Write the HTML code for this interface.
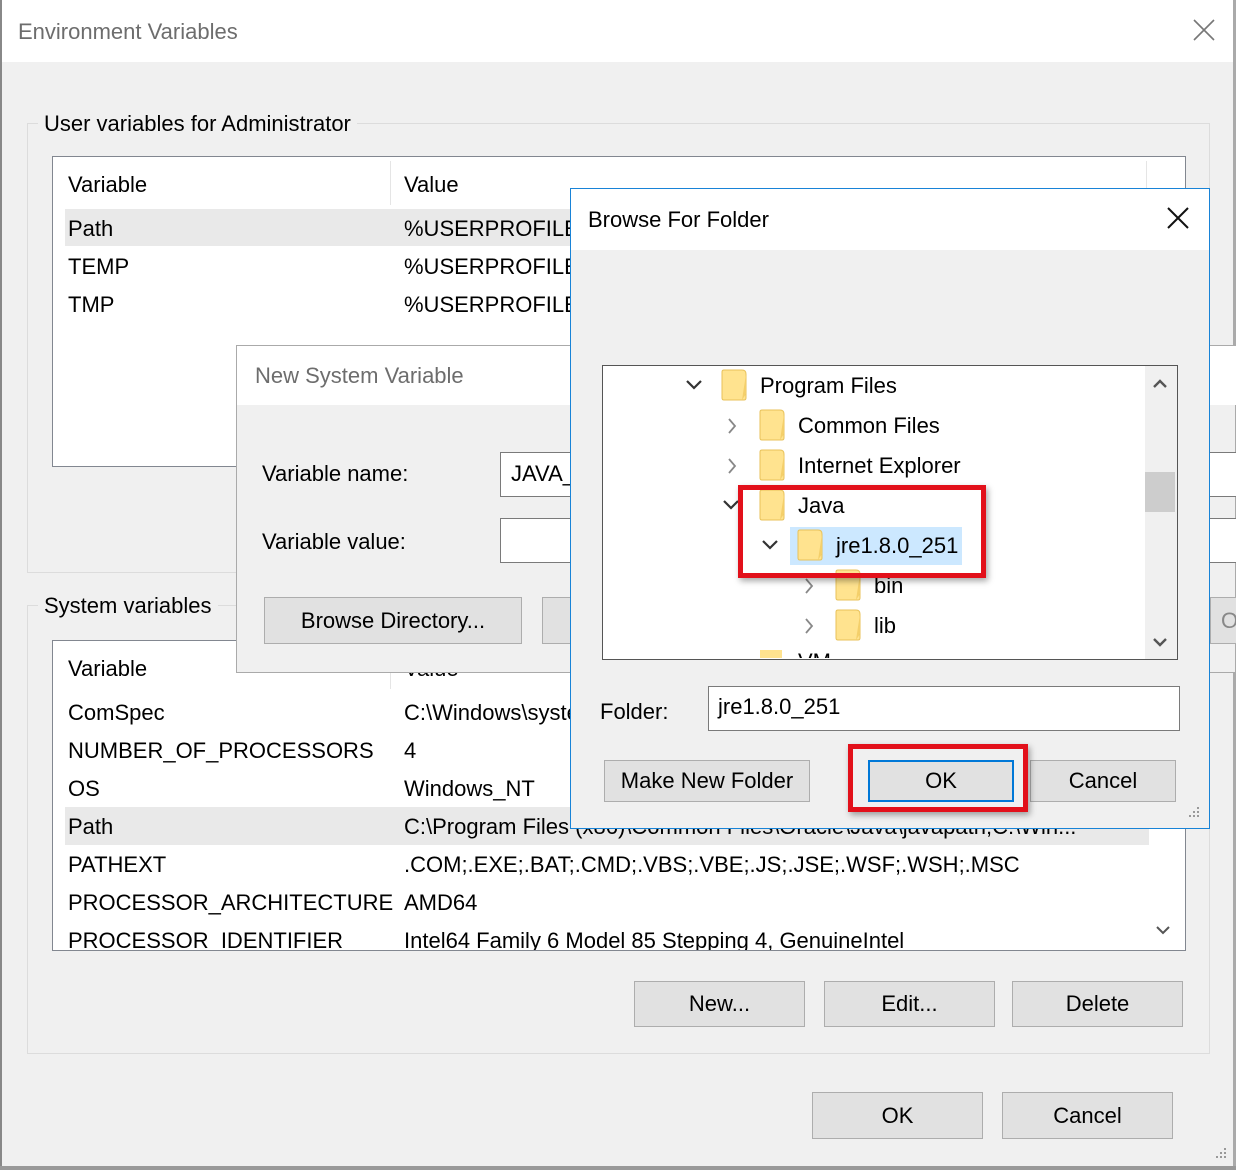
<!DOCTYPE html>
<html><head><meta charset="utf-8">
<style>
*{margin:0;padding:0;box-sizing:border-box}
body{width:1236px;height:1170px;overflow:hidden;background:#f0f0f0;font-family:"Liberation Sans",sans-serif;font-size:22px;color:#000;position:relative}
.a{position:absolute}
.t{position:absolute;white-space:nowrap;line-height:28px}
.btn{position:absolute;background:#e1e1e1;border:1px solid #adadad;text-align:center;font-size:22px}
.box{position:absolute;border:1px solid #828790;background:#fff}
.grp{position:absolute;border:1px solid #dcdcdc}
</style></head><body>

<div class="a" style="left:0;top:0;width:1236px;height:62px;background:#fff"></div>
<div class="t" style="left:18px;top:18px;color:#6d6d6d">Environment Variables</div>
<svg class="a" style="left:1192px;top:18px" width="24" height="24"><path d="M2 2L22 22M22 2L2 22" stroke="#777" stroke-width="1.6"/></svg>
<div class="a" style="left:0;top:0;width:2px;height:1170px;background:#888"></div>
<div class="a" style="left:1233px;top:0;width:3px;height:1170px;background:#aaa"></div>
<div class="a" style="left:0;top:1166px;width:1236px;height:4px;background:#999"></div>

<div class="grp" style="left:27px;top:123px;width:1183px;height:450px"></div>
<div class="t" style="left:38px;top:110px;background:#f0f0f0;padding:0 6px">User variables for Administrator</div>
<div class="box" style="left:52px;top:156px;width:1134px;height:311px;overflow:hidden">
  <div class="a" style="left:337px;top:4px;width:1px;height:44px;background:#e5e5e5"></div>
  <div class="a" style="left:1093px;top:4px;width:1px;height:44px;background:#e5e5e5"></div>
  <div class="t" style="left:15px;top:14px">Variable</div>
  <div class="t" style="left:351px;top:14px">Value</div>
  <div class="a" style="left:12px;top:52px;width:1120px;height:37px;background:#e9e9e9"></div>
  <div class="t" style="left:15px;top:58px">Path</div><div class="t" style="left:351px;top:58px">%USERPROFILE%</div>
  <div class="t" style="left:15px;top:96px">TEMP</div><div class="t" style="left:351px;top:96px">%USERPROFILE%</div>
  <div class="t" style="left:15px;top:134px">TMP</div><div class="t" style="left:351px;top:134px">%USERPROFILE%</div>
</div>

<div class="grp" style="left:27px;top:605px;width:1183px;height:449px"></div>
<div class="t" style="left:38px;top:592px;background:#f0f0f0;padding:0 6px">System variables</div>
<div class="box" style="left:52px;top:640px;width:1134px;height:311px;overflow:hidden">
  <div class="a" style="left:337px;top:4px;width:1px;height:44px;background:#e5e5e5"></div>
  <div class="t" style="left:15px;top:14px">Variable</div>
  <div class="t" style="left:351px;top:14px">Value</div>
  <div class="t" style="left:15px;top:58px">ComSpec</div><div class="t" style="left:351px;top:58px">C:\Windows\system32\cmd.exe</div>
  <div class="t" style="left:15px;top:96px">NUMBER_OF_PROCESSORS</div><div class="t" style="left:351px;top:96px">4</div>
  <div class="t" style="left:15px;top:134px">OS</div><div class="t" style="left:351px;top:134px">Windows_NT</div>
  <div class="a" style="left:12px;top:166px;width:1084px;height:38px;background:#e9e9e9"></div>
  <div class="t" style="left:15px;top:172px">Path</div><div class="t" style="left:351px;top:172px">C:\Program Files (x86)\Common Files\Oracle\Java\javapath;C:\Win...</div>
  <div class="t" style="left:15px;top:210px">PATHEXT</div><div class="t" style="left:351px;top:210px">.COM;.EXE;.BAT;.CMD;.VBS;.VBE;.JS;.JSE;.WSF;.WSH;.MSC</div>
  <div class="t" style="left:15px;top:248px">PROCESSOR_ARCHITECTURE</div><div class="t" style="left:351px;top:248px">AMD64</div>
  <div class="t" style="left:15px;top:286px">PROCESSOR_IDENTIFIER</div><div class="t" style="left:351px;top:286px">Intel64 Family 6 Model 85 Stepping 4, GenuineIntel</div>
  <svg class="a" style="left:1102px;top:283px" width="16" height="12"><path d="M2 3L8 9L14 3" stroke="#555" stroke-width="2" fill="none"/></svg>
</div>
<div class="btn" style="left:634px;top:981px;width:171px;height:46px;line-height:44px">New...</div>
<div class="btn" style="left:824px;top:981px;width:171px;height:46px;line-height:44px">Edit...</div>
<div class="btn" style="left:1012px;top:981px;width:171px;height:46px;line-height:44px">Delete</div>
<div class="btn" style="left:812px;top:1092px;width:171px;height:47px;line-height:45px">OK</div>
<div class="btn" style="left:1002px;top:1092px;width:171px;height:47px;line-height:45px">Cancel</div>
<svg class="a" style="left:1212px;top:1146px" width="16" height="16"><g fill="#999"><rect x="12" y="2" width="2" height="2"/><rect x="8" y="6" width="2" height="2"/><rect x="12" y="6" width="2" height="2"/><rect x="4" y="10" width="2" height="2"/><rect x="8" y="10" width="2" height="2"/><rect x="12" y="10" width="2" height="2"/></g></svg>

<div class="a" style="left:236px;top:345px;width:1000px;height:328px;background:#f0f0f0;border:1px solid #aaa"></div>
<div class="a" style="left:237px;top:346px;width:999px;height:59px;background:#fff"></div>
<div class="t" style="left:255px;top:362px;color:#6d6d6d">New System Variable</div>
<div class="t" style="left:262px;top:460px">Variable name:</div>
<div class="t" style="left:262px;top:528px">Variable value:</div>
<div class="box" style="left:500px;top:452px;width:760px;height:45px;border-color:#7a7a7a"></div>
<div class="t" style="left:511px;top:460px">JAVA_HOME</div>
<div class="box" style="left:500px;top:518px;width:760px;height:45px;border-color:#7a7a7a"></div>
<div class="btn" style="left:264px;top:597px;width:258px;height:47px;line-height:45px">Browse Directory...</div>
<div class="btn" style="left:542px;top:597px;width:60px;height:47px"></div>
<div class="btn" style="left:1210px;top:597px;width:60px;height:47px;line-height:45px;text-align:left;padding-left:10px;color:#888">O</div>

<div class="a" style="left:570px;top:188px;width:640px;height:641px;background:#f0f0f0;border:1px solid #1883d7"></div>
<div class="a" style="left:571px;top:189px;width:638px;height:61px;background:#fff"></div>
<div class="t" style="left:588px;top:206px">Browse For Folder</div>
<svg class="a" style="left:1167px;top:207px" width="22" height="22"><path d="M1 1L21 21M21 1L1 21" stroke="#111" stroke-width="2"/></svg>

<div class="box" style="left:602px;top:365px;width:576px;height:295px;border-color:#555;overflow:hidden">
  <div class="a" style="left:542px;top:0;width:32px;height:293px;background:#f0f0f0"></div>
  <div class="a" style="left:542px;top:106px;width:30px;height:40px;background:#cdcdcd"></div>
  <svg class="a" style="left:549px;top:12px" width="16" height="12"><path d="M2 9L8 3L14 9" stroke="#555" stroke-width="2.4" fill="none"/></svg>
  <svg class="a" style="left:549px;top:270px" width="16" height="12"><path d="M2 3L8 9L14 3" stroke="#555" stroke-width="2.4" fill="none"/></svg>
</div>
<svg class="a" style="left:0;top:0;pointer-events:none" width="1236" height="1170">
  <defs><g id="f"><path d="M0 2Q0 0 2 0H20Q24 0 24 4V28Q24 30 22 30H2Q0 30 0 28Z" fill="#ffe38f" stroke="#e8c25a" stroke-width="1"/><path d="M20 30L24 24V4" fill="#f4cf6a"/></g>
  <path id="cd" d="M0 0L7 7L14 0" fill="none" stroke="#333" stroke-width="2.2"/>
  <path id="cr" d="M0 0L6 7L0 14" fill="none" stroke="#888" stroke-width="1.8"/></defs>
  <rect x="790" y="527" width="172" height="38" fill="#cce8ff"/>
  <use href="#cd" x="687" y="381"/><use href="#f" x="722" y="370"/>
  <use href="#cr" x="729" y="419"/><use href="#f" x="760" y="410"/>
  <use href="#cr" x="729" y="459"/><use href="#f" x="760" y="450"/>
  <use href="#cd" x="724" y="501"/><use href="#f" x="760" y="490"/>
  <use href="#cd" x="763" y="541"/><use href="#f" x="798" y="530"/>
  <use href="#cr" x="806" y="579"/><use href="#f" x="836" y="570"/>
  <use href="#cr" x="806" y="619"/><use href="#f" x="836" y="610"/>
</svg>
<div class="a" style="left:603px;top:366px;width:540px;height:292px;overflow:hidden">
  <div class="t" style="left:157px;top:6px">Program Files</div>
  <div class="t" style="left:195px;top:46px">Common Files</div>
  <div class="t" style="left:195px;top:86px">Internet Explorer</div>
  <div class="t" style="left:195px;top:126px">Java</div>
  <div class="t" style="left:233px;top:166px">jre1.8.0_251</div>
  <div class="t" style="left:271px;top:206px">bin</div>
  <div class="t" style="left:271px;top:246px">lib</div>
  <div class="a" style="left:157px;top:284px;width:22px;height:12px;background:#ffe38f"></div>
  <div class="t" style="left:195px;top:282px">VM</div>
</div>

<div class="t" style="left:600px;top:698px">Folder:</div>
<div class="box" style="left:708px;top:686px;width:472px;height:45px;border-color:#7a7a7a"></div>
<div class="t" style="left:718px;top:693px">jre1.8.0_251</div>
<div class="btn" style="left:604px;top:760px;width:206px;height:42px;line-height:40px">Make New Folder</div>
<div class="btn" style="left:868px;top:760px;width:146px;height:42px;line-height:38px;border:2px solid #0078d7">OK</div>
<div class="btn" style="left:1030px;top:760px;width:146px;height:42px;line-height:40px">Cancel</div>
<svg class="a" style="left:1186px;top:806px" width="16" height="16"><g fill="#999"><rect x="11" y="1" width="2" height="2"/><rect x="7" y="5" width="2" height="2"/><rect x="11" y="5" width="2" height="2"/><rect x="3" y="9" width="2" height="2"/><rect x="7" y="9" width="2" height="2"/><rect x="11" y="9" width="2" height="2"/></g></svg>

<div class="a" style="left:738px;top:485px;width:248px;height:93px;border:5px solid #e2101a;box-shadow:2px 3px 6px rgba(0,0,0,.35)"></div>
<div class="a" style="left:848px;top:744px;width:180px;height:68px;border:5px solid #e2101a;box-shadow:2px 3px 6px rgba(0,0,0,.35)"></div>
</body></html>
